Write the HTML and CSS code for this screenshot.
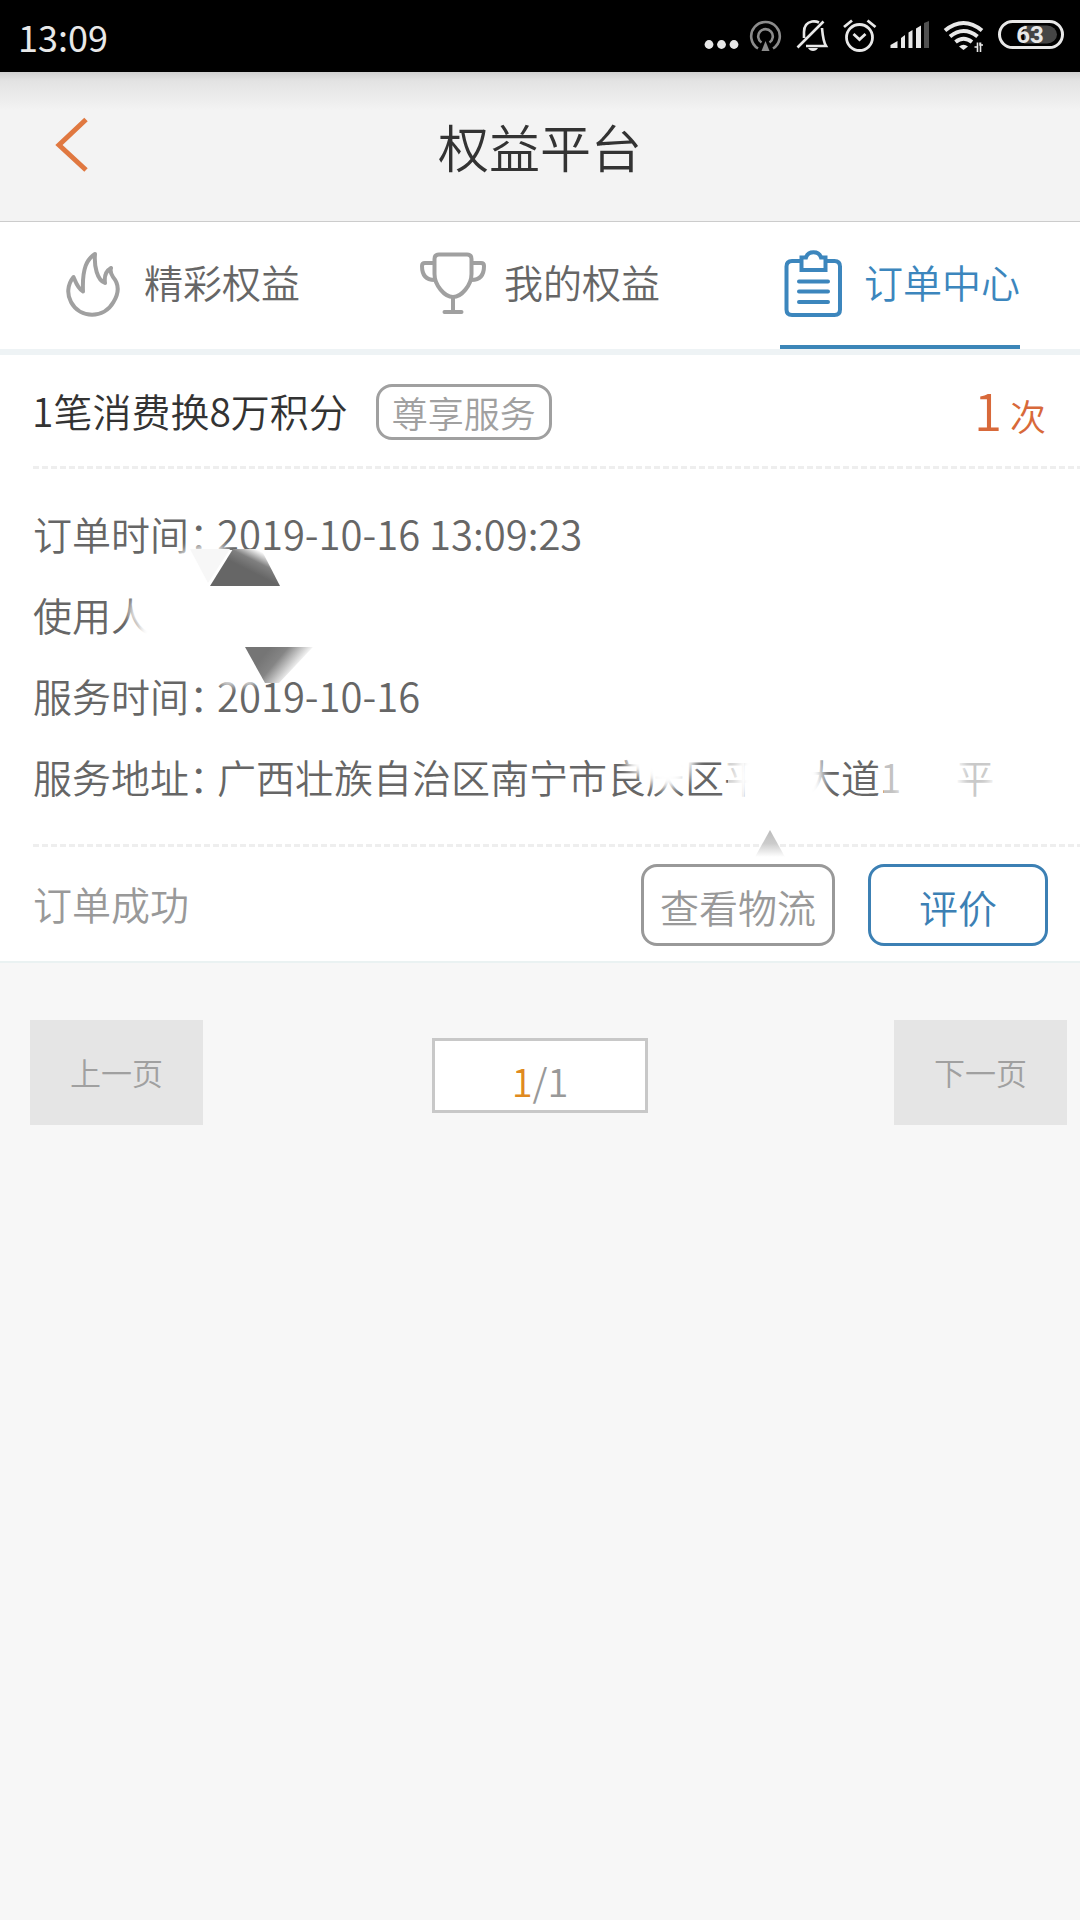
FILE: index.html
```html
<!DOCTYPE html>
<html lang="zh-CN">
<head>
<meta charset="utf-8">
<meta name="viewport" content="width=device-width, initial-scale=1">
<title>权益平台</title>
<link rel="stylesheet" href="styles.css">
</head>
<body>
<div class="status-bar">
  <time class="clock">13:09</time>
  <div class="status-icons">
    <svg width="32" height="34" viewBox="704 20 32 34" fill="#e8e8e8"><circle cx="709" cy="45.500" r="4.400"/><circle cx="721.500" cy="45.500" r="4.400"/><circle cx="734" cy="45.500" r="4.400"/></svg>
    <svg width="34" height="34" viewBox="749 20 34 34" fill="none" stroke="#8c8c8c" stroke-width="2.600"><path d="M758 49.500A14.300 14.300 0 1 1 773 49.500M761.500 43.500A7.300 7.300 0 1 1 769.500 43.500"/><path d="M765.500 42l4 10h-8z" fill="#8c8c8c" stroke="none"/></svg>
    <svg width="34" height="34" viewBox="796 20 34 34" fill="none" stroke="#e8e8e8" stroke-width="2.600"><path d="M797.500 48.500L823.500 22.500M804 39v-6c0-6 3-9.500 8-10.500 3-.500 5 0 7 1M822 29c.700 8 1 13 4 18h-20"/><path d="M808 49h10c-2 4-8 4-10 0z" fill="#e8e8e8" stroke="none"/></svg>
    <svg width="34" height="34" viewBox="843 20 34 34" fill="none" stroke="#e8e8e8" stroke-width="2.800"><circle cx="859.500" cy="38.500" r="13"/><path d="M853.500 35l6 5.500 6-5.500M844 28l8-6.500M867.500 21.500l8 6.500"/></svg>
    <svg width="40" height="34" viewBox="890 20 40 34" fill="#e8e8e8"><path d="M890.500 49v-3l7-4v7zM901 49V39l4-3v13zM908.500 49V33.500l4-2.500v18zM916 49V29.500l5-3V49z"/><path d="M924 49V24l5-2v27z" fill="#505050"/></svg>
    <svg width="41" height="34" viewBox="943 20 41 34" fill="none" stroke="#e8e8e8" stroke-width="4"><path d="M945 31.500q18.500-15 37 0M950 37.500q13.500-11 27.500 0M955.500 43q8-6.500 16.500 0"/><path d="M959 47.500q4.500-3.500 9 0l-4.500 3.500z" fill="#e8e8e8" stroke="none"/><path d="M974.500 48h3V43.500M977.500 43.500V53M983 46h-3V43.500M980.500 43.500V53" stroke-width="1.600"/></svg>
    <svg width="68" height="34" viewBox="997 20 68 34"><rect x="999.500" y="22.500" width="63" height="26" rx="13" fill="none" stroke="#e8e8e8" stroke-width="3"/><path d="M1024 26.500h23a10 9 0 0 1 0 18h-23z" fill="#454545"/><text class="battery-level" x="1030" y="44" text-anchor="middle">63</text></svg>
  </div>
</div>

<header class="app-header">
  <button class="back" type="button" aria-label="返回">
    <svg width="36" height="60" viewBox="54 114 36 60" fill="none" stroke="#e07840" stroke-width="5"><path d="M86 119.500L59 145l27 25"/></svg>
  </button>
  <h1 class="page-title">权益平台</h1>
</header>

<nav class="tabs">
  <a class="tab" href="#benefits">
    <svg width="66" height="68" viewBox="60 250 66 68" fill="none" stroke="#a0a0a0" stroke-width="4" stroke-linejoin="round"><path d="M95 254C87 259 82 268 83 291.500 78 289 76 283 73.500 277 67 285 67 295 71 302 80 319 104 319 113.500 302 119 293 119 284 113 277 111 274 110 271 111 268 106 271 104 276 105 283 97 280 94 266 95 254z"/></svg>
    <span class="tab-label">精彩权益</span>
  </a>
  <a class="tab" href="#mine">
    <svg width="66" height="68" viewBox="420 250 66 68" fill="none" stroke="#a0a0a0" stroke-width="4" stroke-linejoin="round" stroke-linecap="round"><path d="M439 254.500h28q4.500 0 4.500 4.500v15c0 11-10 23-18.500 23s-18.500-12-18.500-23v-15q0-4.500 4.500-4.500zM434.500 263H425q-3 0-3 3c0 9 4 14 12.500 14M471.500 263H481q3 0 3 3c0 9-4 14-12.500 14M453 297v15M444.500 312h17"/></svg>
    <span class="tab-label">我的权益</span>
  </a>
  <a class="tab tab-active" href="#orders" aria-current="page">
    <svg width="66" height="68" viewBox="780 250 66 68" fill="none" stroke="#3c86bd" stroke-width="4" stroke-linejoin="round"><path d="M800 261h-8q-5.500 0-5.500 5.500v43q0 5.500 5.500 5.500h42.500q5.500 0 5.500-5.500v-43q0-5.500-5.500-5.500h-8"/><path d="M801.500 257.500h4.500c2-7 13-7 15 0h4.500V270h-24z" stroke-linejoin="miter"/><path d="M799 281.500h29M799 291.500h29M799 302h29" stroke-linecap="round"/></svg>
    <span class="tab-label">订单中心</span>
  </a>
</nav>

<main>
  <article class="order">
    <div class="order-head">
      <h2 class="order-title">1笔消费换8万积分</h2>
      <span class="badge">尊享服务</span>
      <span class="count"><span class="count-number">1</span> 次</span>
    </div>
    <div class="order-body">
      <dl class="details">
        <div class="row"><dt>订单时间：</dt><dd class="date">2019-10-16 13:09:23</dd></div>
        <div class="row"><dt>使用人</dt><dd></dd></div>
        <div class="row"><dt>服务时间：</dt><dd class="date">2019-10-16</dd></div>
        <div class="row"><dt>服务地址：</dt><dd>广西壮族自治区南宁市良庆区平<span class="blank"></span>大道1<span class="blank blank-wide"></span>平</dd></div>
      </dl>
      <svg class="smudge" width="1080" height="400" viewBox="0 466 1080 400" aria-hidden="true">
        <defs>
          <filter id="soft" x="-50%" y="-50%" width="200%" height="200%"><feGaussianBlur stdDeviation="5"/></filter>
          <linearGradient id="up" gradientUnits="userSpaceOnUse" x1="252" y1="572" x2="262" y2="552"><stop offset="0" stop-color="#666"/><stop offset=".5" stop-color="#808080"/><stop offset="1" stop-color="#fff"/></linearGradient>
          <linearGradient id="down" gradientUnits="userSpaceOnUse" x1="268" y1="650" x2="294" y2="672"><stop offset="0" stop-color="#757575"/><stop offset=".4" stop-color="#858585"/><stop offset="1" stop-color="#fff"/></linearGradient>
          <linearGradient id="small" x1="0" y1="0" x2="0" y2="1"><stop offset="0" stop-color="#bbb"/><stop offset=".5" stop-color="#ccc"/><stop offset="1" stop-color="#fff"/></linearGradient>
        </defs>
        <g fill="#fff" filter="url(#soft)">
          <path d="M180 552l28-8 18 2-4 20h-48z"/>
          <path d="M136 596h30v50h-32l4-18-10-14z"/>
          <path d="M215 672h44l-4 13h-34z"/>
          <path d="M624 748h70l2 14-8 18-18 10-16-4-12-10-14-6z"/>
          <path d="M740 748h80l4 36-2 26h-76l-10-30z"/>
          <path d="M900 748h62v62h-62z"/>
          <path d="M992 770h24v40h-32z"/>
        </g>
        <rect x="955" y="750" width="50" height="56" fill="#fff" opacity=".65"/>
        <rect x="884" y="755" width="28" height="46" fill="#fff" opacity=".6"/>
        <rect x="728" y="755" width="16" height="46" fill="#fff" opacity=".7"/>
        <path d="M190 549h40l-22 34z" fill="#f7f7f7"/>
        <path d="M233 549h28l19 37h-70z" fill="url(#up)"/>
        <path d="M245 647h68l-34 36h-14z" fill="url(#down)"/>
        <path d="M770 830l15 27h-30z" fill="url(#small)"/>
      </svg>
    </div>
    <div class="order-foot">
      <span class="state">订单成功</span>
      <button class="action" type="button">查看物流</button>
      <button class="action action-primary" type="button">评价</button>
    </div>
  </article>

  <div class="pager">
    <button class="page-button" type="button">上一页</button>
    <div class="page-index"><span class="current">1</span>/1</div>
    <button class="page-button page-next" type="button">下一页</button>
  </div>
</main>
</body>
</html>
```
FILE: styles.css
```css
* { box-sizing: border-box; }

body {
  margin: 0;
  min-height: 100vh;
  background: #f7f7f7;
  color: #666;
  font-family: "Noto Sans CJK SC", sans-serif;
  font-weight: 350;
  font-size: 39px;
}

button {
  font: inherit;
  cursor: pointer;
}

.status-bar {
  display: flex;
  align-items: center;
  justify-content: space-between;
  height: 72px;
  padding: 0 15px 0 18px;
  background: #000;
  color: #e8e8e8;
}

.clock {
  font-size: 36px;
  font-weight: 400;
}

.status-icons {
  display: flex;
  align-items: center;
  gap: 13px;
}

.status-icons svg { overflow: visible; }

.battery-level {
  fill: #e8e8e8;
  font-family: Roboto, sans-serif;
  font-size: 24px;
  font-weight: 700;
}

.app-header {
  display: grid;
  grid-template-columns: 120px 1fr 120px;
  align-items: center;
  height: 150px;
  border-bottom: 1px solid #ccc;
  background: linear-gradient(#cfcfcf, #e3e3e3 9px, #e9e9e9 20px, #f3f3f3 38px);
}

.back {
  display: flex;
  padding: 0 0 6px 54px;
  border: 0;
  background: none;
}

.page-title {
  margin: 0;
  color: #333;
  font-size: 51px;
  font-weight: 350;
  line-height: 75px;
  text-align: center;
}

.tabs {
  display: flex;
  justify-content: space-between;
  padding: 0 60px;
  border-bottom: 6px solid #eef3f5;
  background: #fff;
}

.tab {
  display: flex;
  align-items: center;
  gap: 18px;
  height: 127px;
  border-bottom: 4px solid transparent;
  color: #666;
  line-height: 56px;
  text-decoration: none;
  white-space: nowrap;
}

.tab-label { padding-bottom: 5px; }

.tab-active {
  border-color: #3c86b8;
  color: #3c86bd;
}

.order {
  border-bottom: 2px solid #eaf2f2;
  background: #fff;
}

.order-head {
  display: flex;
  align-items: center;
  height: 111px;
  padding: 2px 34px 0 32px;
}

.order-title {
  margin: 0;
  padding-bottom: 4px;
  color: #333;
  font-size: 39px;
  font-weight: 350;
}

.badge {
  margin-left: 28px;
  padding: 0 13px;
  border: 3px solid #a0a0a0;
  border-radius: 16px;
  color: #a0a0a0;
  font-size: 36px;
  line-height: 50px;
}

.count {
  margin-left: auto;
  color: #d8693a;
  font-size: 36px;
  line-height: 60px;
}

.count-number { font-size: 51px; }

.order-body {
  position: relative;
  padding: 27px 0 27px 33px;
}

/* Dashed rules run from the text margin to the screen edge */
.order-body::before,
.order-foot::before {
  content: "";
  position: absolute;
  top: 0;
  left: 33px;
  right: 0;
  height: 3px;
  background: repeating-linear-gradient(90deg, #eee 0 6px, #fff 6px 9px);
}

.details { margin: 0; }

.row {
  display: flex;
  height: 81px;
  line-height: 81px;
  white-space: nowrap;
}

.row dt {
  flex: 0 0 184px;
  min-width: 0;
}

.row dd { margin: 0; }
.row .date { font-size: 40px; }

.blank {
  display: inline-block;
  width: 39px;
}

.blank-wide { width: 54px; }

.smudge {
  position: absolute;
  top: 0;
  left: 0;
  z-index: 1;
  pointer-events: none;
}

.order-foot {
  position: relative;
  display: flex;
  align-items: center;
  height: 117px;
  padding: 4px 32px 0 33px;
}

.state {
  margin-right: auto;
  padding-bottom: 4px;
  color: #999;
}

.action {
  height: 82px;
  margin-left: 33px;
  padding: 2px 16px 0;
  border: 3px solid #999;
  border-radius: 16px;
  background: #fff;
  color: #999;
}

.action-primary {
  padding: 2px 48px 0;
  border-color: #3c80b4;
  color: #3c80b4;
}

.pager {
  display: grid;
  grid-template-columns: 173px 1fr 173px;
  align-items: center;
  padding: 57px 30px;
}

.page-button {
  width: 173px;
  height: 105px;
  padding: 0 0 3px;
  border: 0;
  background: #e5e5e5;
  color: #a0a0a0;
  font-size: 31px;
}

/* The right button sits closer to the screen edge; the counter stays centred */
.page-next { margin-left: 17px; }

.page-index {
  justify-self: center;
  width: 216px;
  margin-top: 5px;
  padding-top: 10px;
  border: 3px solid #c8c8c8;
  background: #fff;
  color: #999;
  font-size: 38px;
  line-height: 59px;
  text-align: center;
}

.current { color: #e08a20; }
```
